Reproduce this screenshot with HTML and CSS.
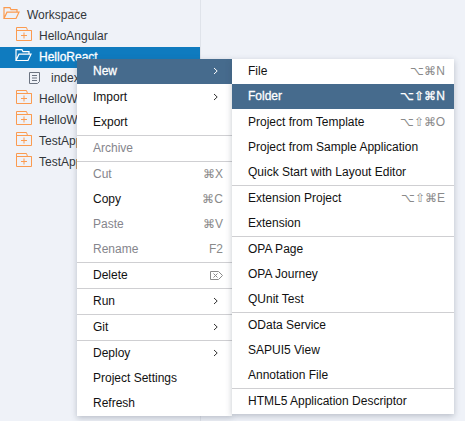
FILE: index.html
```html
<!DOCTYPE html>
<html lang="en">
<head>
    <meta charset="UTF-8">
    <meta name="viewport" content="width=device-width, initial-scale=1.0">
    <title>Workspace</title>
    <link rel="stylesheet" href="styles.css">
</head>
<body>
    <svg class="defs" width="0" height="0">
        <symbol id="closed" viewBox="0 0 16 14">
            <path d="M.5 13.500V.5h10l1 3h4v10zM.5 3.500h15M8 5.500v6M5 8.500h6" fill="none" stroke="currentColor"/>
        </symbol>
        <symbol id="open" viewBox="0 0 17 12">
            <path d="M1 11.500V.7h6l1 2h6v2.500M1 11.500l3-6.300h12l-3 6.300z" fill="none" stroke="currentColor" stroke-width="1.200"/>
        </symbol>
        <symbol id="chev" viewBox="0 0 6 8">
            <path d="M1 1 4.200 4 1 7" fill="none" stroke="currentColor" stroke-width="1"/>
        </symbol>
    </svg>

    <div class="sidebar">
        <div class="node"><svg class="ic-open orange"><use href="#open"/></svg>Workspace</div>
        <div class="node depth1"><svg class="ic-closed orange"><use href="#closed"/></svg>HelloAngular</div>
        <div class="node depth1 selected"><svg class="ic-open"><use href="#open"/></svg>HelloReact</div>
        <div class="node depth2">
            <svg class="ic-file" viewBox="0 0 12 12"><path d="M.5.5h10v9l-2 2h-8zM3 3.500h5M3 6h5M3 8.500h5" fill="none" stroke="#6b7380"/></svg>index
        </div>
        <div class="node depth1"><svg class="ic-closed orange"><use href="#closed"/></svg>HelloW</div>
        <div class="node depth1"><svg class="ic-closed orange"><use href="#closed"/></svg>HelloW</div>
        <div class="node depth1"><svg class="ic-closed orange"><use href="#closed"/></svg>TestApp</div>
        <div class="node depth1"><svg class="ic-closed orange"><use href="#closed"/></svg>TestApp</div>
    </div>

    <div class="menu main-menu">
        <div class="item active gap">New<svg class="chev"><use href="#chev"/></svg></div>
        <div class="item">Import<svg class="chev"><use href="#chev"/></svg></div>
        <div class="item">Export</div>
        <hr>
        <div class="item off">Archive</div>
        <hr>
        <div class="item off">Cut<span class="keys">⌘X</span></div>
        <div class="item">Copy<span class="keys">⌘C</span></div>
        <div class="item off">Paste<span class="keys">⌘V</span></div>
        <div class="item off">Rename<span class="keys">F2</span></div>
        <hr>
        <div class="item">Delete
            <svg class="del" viewBox="0 0 13 9"><path d="M.5.5h8l4 4-4 4h-8zM3.500 2.500l4 4M7.500 2.500l-4 4" fill="none" stroke="#8a8a8a"/></svg>
        </div>
        <hr>
        <div class="item">Run<svg class="chev"><use href="#chev"/></svg></div>
        <hr>
        <div class="item">Git<svg class="chev"><use href="#chev"/></svg></div>
        <hr>
        <div class="item">Deploy<svg class="chev"><use href="#chev"/></svg></div>
        <div class="item">Project Settings</div>
        <div class="item">Refresh</div>
    </div>

    <div class="menu sub-menu">
        <div class="item">File<span class="keys">⌥⌘N</span></div>
        <div class="item active gap">Folder<span class="keys">⌥⇧⌘N</span></div>
        <div class="item">Project from Template<span class="keys">⌥⇧⌘O</span></div>
        <div class="item">Project from Sample Application</div>
        <div class="item">Quick Start with Layout Editor</div>
        <hr>
        <div class="item">Extension Project<span class="keys">⌥⇧⌘E</span></div>
        <div class="item">Extension</div>
        <hr>
        <div class="item">OPA Page</div>
        <div class="item">OPA Journey</div>
        <div class="item">QUnit Test</div>
        <hr>
        <div class="item">OData Service</div>
        <div class="item">SAPUI5 View</div>
        <div class="item">Annotation File</div>
        <hr>
        <div class="item">HTML5 Application Descriptor</div>
    </div>
</body>
</html>
```

FILE: styles.css
```css
html, body {
    height: 100%;
}

body {
    margin: 0;
    background-color: #eff2f8;
    font-family: "Liberation Sans", Arial, sans-serif;
    font-size: 12px;
    color: #1f1f24;
    overflow: hidden;
}

.defs {
    display: block;
    height: 0;
}

.sidebar {
    width: 201px;
    height: 421px;
    box-sizing: border-box;
    padding-top: 5px;
    border-right: 1px solid #dfe3ea;
}

.node {
    display: flex;
    align-items: center;
    box-sizing: border-box;
    height: 21px;
    padding: 0 0 1px 3px;
    color: #32363a;
}

.depth1 {
    padding-left: 16px;
}

.depth2 {
    padding-left: 29px;
}

.selected {
    background-color: #0f7bbf;
    color: #fff;
    -webkit-text-stroke: 0.3px #fff;
    padding-left: 15px;
}

.orange {
    color: #fb9b50;
}

.ic-open {
    width: 17px;
    height: 12px;
    margin: 0 7px 4px 0;
}

.ic-closed {
    width: 16px;
    height: 14px;
    margin: 0 7px 4px 0;
}

.ic-file {
    width: 12px;
    height: 12px;
    margin-right: 10px;
}

.menu {
    position: absolute;
    top: 59px;
    background-color: #fff;
    box-shadow: 0 2px 6px rgba(60, 70, 90, 0.3);
}

.main-menu {
    left: 77px;
    width: 155px;
}

.sub-menu {
    left: 232px;
    width: 222px;
}

.item {
    display: flex;
    align-items: center;
    justify-content: space-between;
    box-sizing: border-box;
    height: 25px;
    padding: 0 9px 1px 16px;
    color: #111;
}

.active {
    background-color: #466b8d;
    color: #fff;
    -webkit-text-stroke: 0.3px #fff;
}

.gap {
    margin-bottom: 1px;
}

.off {
    color: #85858c;
}

.keys {
    font-size: 12px;
    color: #8a8a8a;
}

.active .keys {
    color: #fff;
}

.chev {
    width: 6px;
    height: 8px;
    margin-right: 4px;
    color: #333;
}

.active .chev {
    color: #fff;
}

.del {
    width: 13px;
    height: 9px;
}

hr {
    height: 1px;
    margin: 0;
    border: 0;
    background-color: #cfcfd2;
}
```
